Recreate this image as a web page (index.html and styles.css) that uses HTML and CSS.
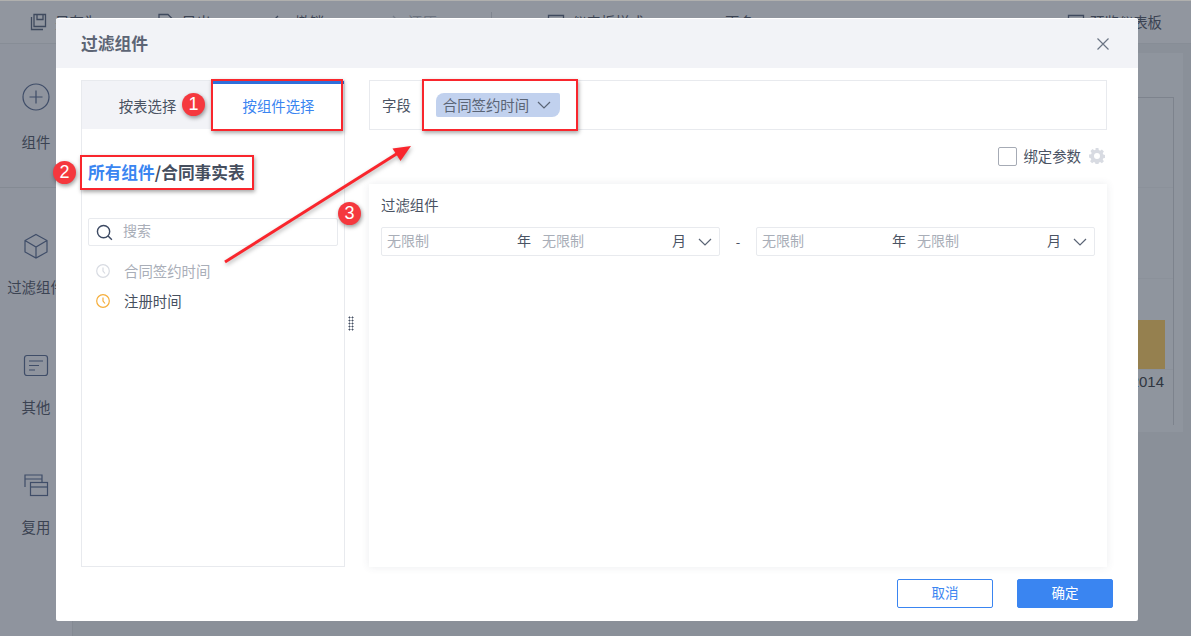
FILE: index.html
```html
<!DOCTYPE html>
<html lang="zh-CN">
<head>
<meta charset="utf-8">
<title>过滤组件</title>
<link rel="stylesheet" href="styles.css">
</head>
<body>
<div class="app">
  <header class="toolbar">
    <div class="tool tool-save"><svg class="tool-icon" viewBox="0 0 18 18"><path d="M4 1.500h11.500v12H4zM7 1.500v5h6v-5M1.500 4v12.500H13"/></svg><span>另存为</span></div>
    <div class="tool tool-export"><svg class="tool-icon" viewBox="0 0 18 18"><path d="M2 1.500h9l4 4v11H2z"/></svg><span>导出</span></div>
    <div class="tool tool-undo"><svg class="tool-icon" viewBox="0 0 18 18"><path d="M8 3 3 8l5 5M3 8h12"/></svg><span>撤销</span></div>
    <div class="tool tool-redo"><svg class="tool-icon faint" viewBox="0 0 18 18"><path d="m10 3 5 5-5 5M15 8H3"/></svg><span class="faint-text">还原</span></div>
    <div class="tool-sep"></div>
    <div class="tool tool-style"><svg class="tool-icon" viewBox="0 0 18 18"><path d="M1.500 2.500h15v13h-15zM5 6h3v5H5z"/></svg><span>仪表板样式</span></div>
    <div class="tool tool-more"><span>更多</span></div>
    <div class="tool tool-preview"><svg class="tool-icon" viewBox="0 0 18 18"><path d="M1.500 2.500h15v13h-15z"/></svg><span>预览仪表板</span></div>
  </header>
  <div class="workspace">
    <nav class="sidebar">
      <div class="side-item side-first">
        <svg class="side-icon" viewBox="0 0 28 28"><circle cx="14" cy="14" r="13"/><path d="M14 7.500v13M7.500 14h13"/></svg>
        <span>组件</span>
      </div>
      <div class="side-item">
        <svg class="side-icon" viewBox="0 0 28 28"><path d="M14 2.500 25 8.500v11.500L14 26 3 20V8.500zM3 8.500l11 6.500 11-6.500M14 15v11"/></svg>
        <span>过滤组件</span>
      </div>
      <div class="side-item">
        <svg class="side-icon" viewBox="0 0 28 28"><rect x="2.500" y="3.500" width="23" height="20" rx="2.500"/><path d="M7 9h14M7 13.500h10M7 18h6"/></svg>
        <span>其他</span>
      </div>
      <div class="side-item">
        <svg class="side-icon" viewBox="0 0 28 28"><path d="M3 15V3h17v7M3 7h17"/><rect x="8.500" y="10.500" width="17" height="13"/><path d="M8.500 15h17"/></svg>
        <span>复用</span>
      </div>
    </nav>
    <main class="canvas">
      <div class="panel">
        <div class="chart">
          <div class="chart-row"></div>
          <div class="chart-row"></div>
          <div class="chart-row"><div class="bar"></div></div>
          <div class="chart-label">2014</div>
        </div>
      </div>
    </main>
  </div>

  <section class="modal">
    <div class="modal-head">
      <h1 class="modal-title">过滤组件</h1>
      <svg class="close" viewBox="0 0 14 14"><path d="m1.500 1.500 11 11M12.500 1.500l-11 11"/></svg>
    </div>
    <div class="modal-body">
      <aside class="picker">
        <div class="tabs">
          <div class="tab">按表选择</div>
          <div class="tab tab-active">按组件选择</div>
        </div>
        <div class="picker-inner">
          <div class="crumb"><span class="crumb-link">所有组件</span>/合同事实表</div>
          <div class="search">
            <svg class="search-icon" viewBox="0 0 18 18"><circle cx="8" cy="8" r="6.500"/><path d="m12.800 12.800 4 4"/></svg>
            <span class="search-hint">搜索</span>
          </div>
          <ul class="fields">
            <li class="field field-off">
              <svg class="clock" viewBox="0 0 14 14"><circle cx="7" cy="7" r="6.300"/><path d="M7 3.500V7l2 2.500"/></svg>
              <span class="field-name">合同签约时间</span>
            </li>
            <li class="field">
              <svg class="clock" viewBox="0 0 14 14"><circle cx="7" cy="7" r="6.300"/><path d="M7 3.500V7l2 2.500"/></svg>
              <span class="field-name">注册时间</span>
            </li>
          </ul>
        </div>
      </aside>
      <div class="splitter"><div class="grip"></div></div>
      <div class="config">
        <div class="field-row">
          <span class="field-label">字段</span>
          <div class="chip"><span class="chip-text">合同签约时间</span>
            <svg class="chev chip-chev" viewBox="0 0 14 8"><path d="m1 1 6 6 6-6"/></svg>
          </div>
        </div>
        <div class="param-row">
          <span class="checkbox"></span>
          <span class="param-text">绑定参数</span>
          <svg class="gear" viewBox="0 0 16 16"><path fill-rule="evenodd" d="M6.600 0h2.800l.4 2.100 1.300.6 1.800-1.200 2 2-1.200 1.800.6 1.300 2.100.4v2.800l-2.100.4-.6 1.300 1.200 1.800-2 2-1.800-1.200-1.300.6-.4 2.100H6.600l-.4-2.100-1.300-.6-1.800 1.200-2-2 1.200-1.800-.6-1.300L0 9.400V6.600l2.100-.4.6-1.300-1.200-1.800 2-2 1.800 1.200 1.300-.6zM8 5a3 3 0 1 0 0 6 3 3 0 0 0 0-6z"/></svg>
        </div>
        <div class="card">
          <div class="card-title">过滤组件</div>
          <div class="range">
            <div class="date">
              <div class="seg"><span class="hint">无限制</span><span>年</span></div>
              <div class="seg"><span class="hint">无限制</span><span>月</span></div>
              <svg class="chev date-chev" viewBox="0 0 14 8"><path d="m1 1 6 6 6-6"/></svg>
            </div>
            <span class="dash">-</span>
            <div class="date">
              <div class="seg"><span class="hint">无限制</span><span>年</span></div>
              <div class="seg"><span class="hint">无限制</span><span>月</span></div>
              <svg class="chev date-chev" viewBox="0 0 14 8"><path d="m1 1 6 6 6-6"/></svg>
            </div>
          </div>
        </div>
      </div>
    </div>
    <div class="modal-foot">
      <button class="btn btn-ghost">取消</button>
      <button class="btn btn-primary">确定</button>
    </div>
  </section>

  <div class="mark mark-tab"></div>
  <div class="mark mark-crumb"></div>
  <div class="mark mark-chip"></div>
  <div class="badge badge-1">1</div>
  <div class="badge badge-2">2</div>
  <div class="badge badge-3">3</div>
  <svg class="arrow" viewBox="0 0 1191 636"><path class="arrow-line" d="M225 262 398 153"/><path class="arrow-head" d="M411 146 392.500 148.500 400.500 161z"/></svg>
</div>
</body>
</html>
```
FILE: styles.css
```css
* { box-sizing: border-box; }
html, body { margin: 0; padding: 0; }
body {
  font-family: "Noto Sans CJK SC", "Noto Sans", "Liberation Sans", sans-serif;
  color: #4a5363;
  font-size: 14px;
}
.app {
  position: relative;
  width: 1191px;
  height: 636px;
  overflow: hidden;
  background: #8a9099;
  border-top: 1px solid #b0b0ae;
}
svg { display: block; fill: none; }

/* background application */
.toolbar {
  position: relative;
  height: 43px;
  background: #91969f;
  border-bottom: 1px solid #878d96;
  color: #3b4352;
  font-size: 14.400px;
}
.tool {
  position: absolute;
  top: 12px;
  display: flex;
  align-items: center;
  gap: 7px;
  height: 18px;
  line-height: 18px;
}
.tool-save { left: 30px; }
.tool-export { left: 157px; }
.tool-undo { left: 270px; }
.tool-redo { left: 383px; }
.tool-style { left: 547px; }
.tool-more { left: 725px; }
.tool-preview { left: 1067px; gap: 5px; }
.tool-icon { width: 18px; height: 18px; stroke: #3f4a5e; stroke-width: 1.300; }
.tool-icon.faint { stroke: #757c88; }
.faint-text { color: #6c737f; }
.tool-sep { position: absolute; left: 491px; top: 11px; width: 1px; height: 20px; background: #7f858f; }

.workspace { display: flex; height: 592px; }
.sidebar {
  width: 73px;
  height: 100%;
  padding-top: 39px;
  background: #8f949e;
  border-right: 1px solid #848a93;
  display: flex;
  flex-direction: column;
  align-items: center;
  color: #3b4352;
  font-size: 14.400px;
}
.side-item {
  width: 100%;
  display: flex;
  flex-direction: column;
  align-items: center;
  gap: 17px;
  padding-bottom: 55px;
  line-height: 20px;
  white-space: nowrap;
}
.side-first {
  gap: 21px;
  padding-bottom: 35px;
  margin-bottom: 44px;
  border-bottom: 1px solid #848a93;
}
.side-icon { width: 28px; height: 28px; stroke: #3f4d68; stroke-width: 1.200; }
.canvas { flex: 1; padding: 9px 8px 0 0; }
.panel {
  height: 379px;
  background: #8f959e;
  padding: 44px 9px 0 0;
}
.chart {
  height: 328px;
  border-top: 1px solid #7d838d;
  border-right: 1px solid #7d838d;
  display: flex;
  flex-direction: column;
}
.chart-row {
  height: 91px;
  border-bottom: 1px solid #8b919a;
  display: flex;
  justify-content: flex-end;
  align-items: flex-end;
  padding-right: 8px;
}
.chart-row:first-child { height: 90px; }
.bar { width: 120px; height: 49px; background: #95804f; }
.chart-label {
  padding-right: 9px;
  text-align: right;
  font-family: "Liberation Sans", sans-serif;
  font-size: 15px;
  line-height: 24px;
  color: #2f3540;
}

/* modal */
.modal {
  position: absolute;
  left: 56px;
  top: 17px;
  width: 1082px;
  height: 603px;
  background: #fff;
  border-top: 1px solid #fff;
  border-radius: 2px;
  display: flex;
  flex-direction: column;
}
.modal-head {
  height: 49px;
  flex: none;
  background: #f2f3f7;
  display: flex;
  align-items: center;
  justify-content: space-between;
  padding: 0 28px 0 25px;
}
.modal-title { margin: 0; padding-bottom: 2px; font-size: 16.800px; font-weight: 700; color: #5d6575; }
.close { width: 14px; height: 14px; stroke: #6b7484; stroke-width: 1.200; }
.modal-body {
  flex: none;
  height: 499px;
  padding: 12px 31px 0 25px;
  display: flex;
}
.picker {
  width: 264px;
  height: 487px;
  border: 1px solid #e8eaee;
  flex: none;
}
.tabs { display: flex; height: 48px; }
.tab {
  flex: 1;
  background: #f2f3f7;
  display: flex;
  align-items: center;
  justify-content: center;
  font-size: 14.400px;
  color: #4a5363;
}
.tab-active {
  background: #fff;
  color: #3a85f1;
  border-top: 3px solid #2f6fdb;
  padding-bottom: 3px;
}
.picker-inner { padding: 0 6px; }
.crumb {
  margin-top: 31px;
  height: 25px;
  line-height: 24px;
  font-size: 16.700px;
  font-weight: 700;
  color: #454e5e;
  white-space: nowrap;
}
.crumb-link { color: #3a85f1; }
.search {
  margin-top: 33px;
  height: 28px;
  border: 1px solid #e8eaee;
  border-radius: 2px;
  display: flex;
  align-items: center;
  padding-left: 7px;
  gap: 10px;
  color: #a9aeb8;
  font-size: 14px;
}
.search-hint { padding-bottom: 4px; }
.search-icon { width: 17px; height: 17px; stroke: #3d4a63; stroke-width: 1.500; }
.fields { list-style: none; margin: 10px 0 0; padding: 0 0 0 8px; }
.field {
  height: 30px;
  display: flex;
  align-items: center;
  gap: 14px;
  font-size: 14.400px;
  color: #46505f;
}
.field-name { padding-bottom: 2px; }
.field-off { color: #a9aeb8; }
.clock { width: 14px; height: 14px; stroke: #f5ae3b; stroke-width: 1.200; }
.field-off .clock { stroke: #d8dbe2; }
.splitter { width: 24px; flex: none; display: flex; align-items: center; justify-content: center; }
.grip {
  width: 6px;
  height: 15px;
  margin-right: 12px;
  background-image: radial-gradient(circle, #465063 0.9px, transparent 1.100px);
  background-size: 3px 3px;
}
.config { flex: 1; min-width: 0; display: flex; flex-direction: column; }
.field-row {
  height: 50px;
  border: 1px solid #e8eaee;
  display: flex;
  align-items: center;
  padding-left: 12px;
}
.field-label { font-size: 14.400px; color: #4a5363; margin-right: 25px; padding-bottom: 1px; }
.chip {
  height: 24px;
  width: 124px;
  padding-left: 7px;
  background: #c1d1ee;
  border-radius: 8px 2px 8px 2px;
  display: flex;
  align-items: center;
  justify-content: space-between;
  padding-right: 9px;
  font-size: 14.400px;
  color: #5a6475;
  white-space: nowrap;
}
.chip-text { padding-bottom: 1px; }
.chev { stroke: #5a6475; stroke-width: 1.200; }
.chip-chev { width: 14px; height: 8px; }
.param-row {
  margin-top: 17px;
  height: 18px;
  display: flex;
  align-items: center;
  justify-content: flex-end;
  padding-right: 2px;
}
.checkbox {
  width: 19px;
  height: 19px;
  border: 1px solid #a6abb5;
  border-radius: 2px;
  margin-right: 6px;
}
.param-text { font-size: 14.400px; color: #4a5363; margin-right: 8px; padding-bottom: 2px; white-space: nowrap; }
.gear { width: 16px; height: 16px; fill: #d8dbe2; }
.card {
  margin-top: 19px;
  flex: 1;
  background: #fff;
  box-shadow: 0 0 8px rgba(60, 70, 90, 0.1);
  padding: 11px 12px 0;
}
.card-title { font-size: 14.400px; line-height: 20px; color: #4a5363; }
.range { margin-top: 12px; display: flex; align-items: center; }
.dash { width: 36px; text-align: center; font-size: 13px; color: #4a5363; }
.date {
  width: 339px;
  height: 29px;
  border: 1px solid #e8eaee;
  border-radius: 2px;
  display: flex;
  align-items: center;
  font-size: 14px;
  color: #4a5363;
}
.seg {
  width: 155px;
  padding: 0 6px 3px 5px;
  display: flex;
  justify-content: space-between;
}
.hint { color: #a9aeb8; font-size: 14px; }
.date-chev { width: 14px; height: 8px; margin-left: 6px; }
.modal-foot {
  flex: none;
  display: flex;
  justify-content: flex-end;
  gap: 24px;
  padding: 12px 25px 0 0;
}
.btn {
  width: 96px;
  height: 29px;
  border-radius: 2px;
  font-family: inherit;
  font-size: 13.500px;
  padding: 0 0 3px;
}
.btn-ghost { background: #fff; border: 1px solid #3a85f1; color: #3a85f1; }
.btn-primary { background: #3a85f1; border: 1px solid #3a85f1; color: #fff; }

/* annotations over the screenshot */
.mark {
  position: absolute;
  border: 2px solid #f9262d;
  box-shadow: 1px 2px 4px rgba(0, 0, 0, 0.35);
}
.mark-tab { left: 211px; top: 78px; width: 132px; height: 52px; }
.mark-crumb { left: 80px; top: 154px; width: 174px; height: 35px; }
.mark-chip { left: 422px; top: 78px; width: 156px; height: 52px; }
.badge {
  position: absolute;
  width: 23px;
  height: 23px;
  border-radius: 50%;
  background: #f5383e;
  color: #fff;
  font-family: "Liberation Sans", sans-serif;
  font-size: 18px;
  line-height: 23px;
  text-align: center;
  box-shadow: 1px 2px 4px rgba(0, 0, 0, 0.4);
}
.badge-1 { left: 182px; top: 92px; }
.badge-2 { left: 53px; top: 160px; }
.badge-3 { left: 338px; top: 201px; }
.arrow {
  position: absolute;
  left: 0;
  top: -1px;
  width: 1191px;
  height: 636px;
  pointer-events: none;
  filter: drop-shadow(1px 2px 2px rgba(0, 0, 0, 0.3));
}
.arrow-line { stroke: #f9262d; stroke-width: 3; }
.arrow-head { fill: #f9262d; }
```
